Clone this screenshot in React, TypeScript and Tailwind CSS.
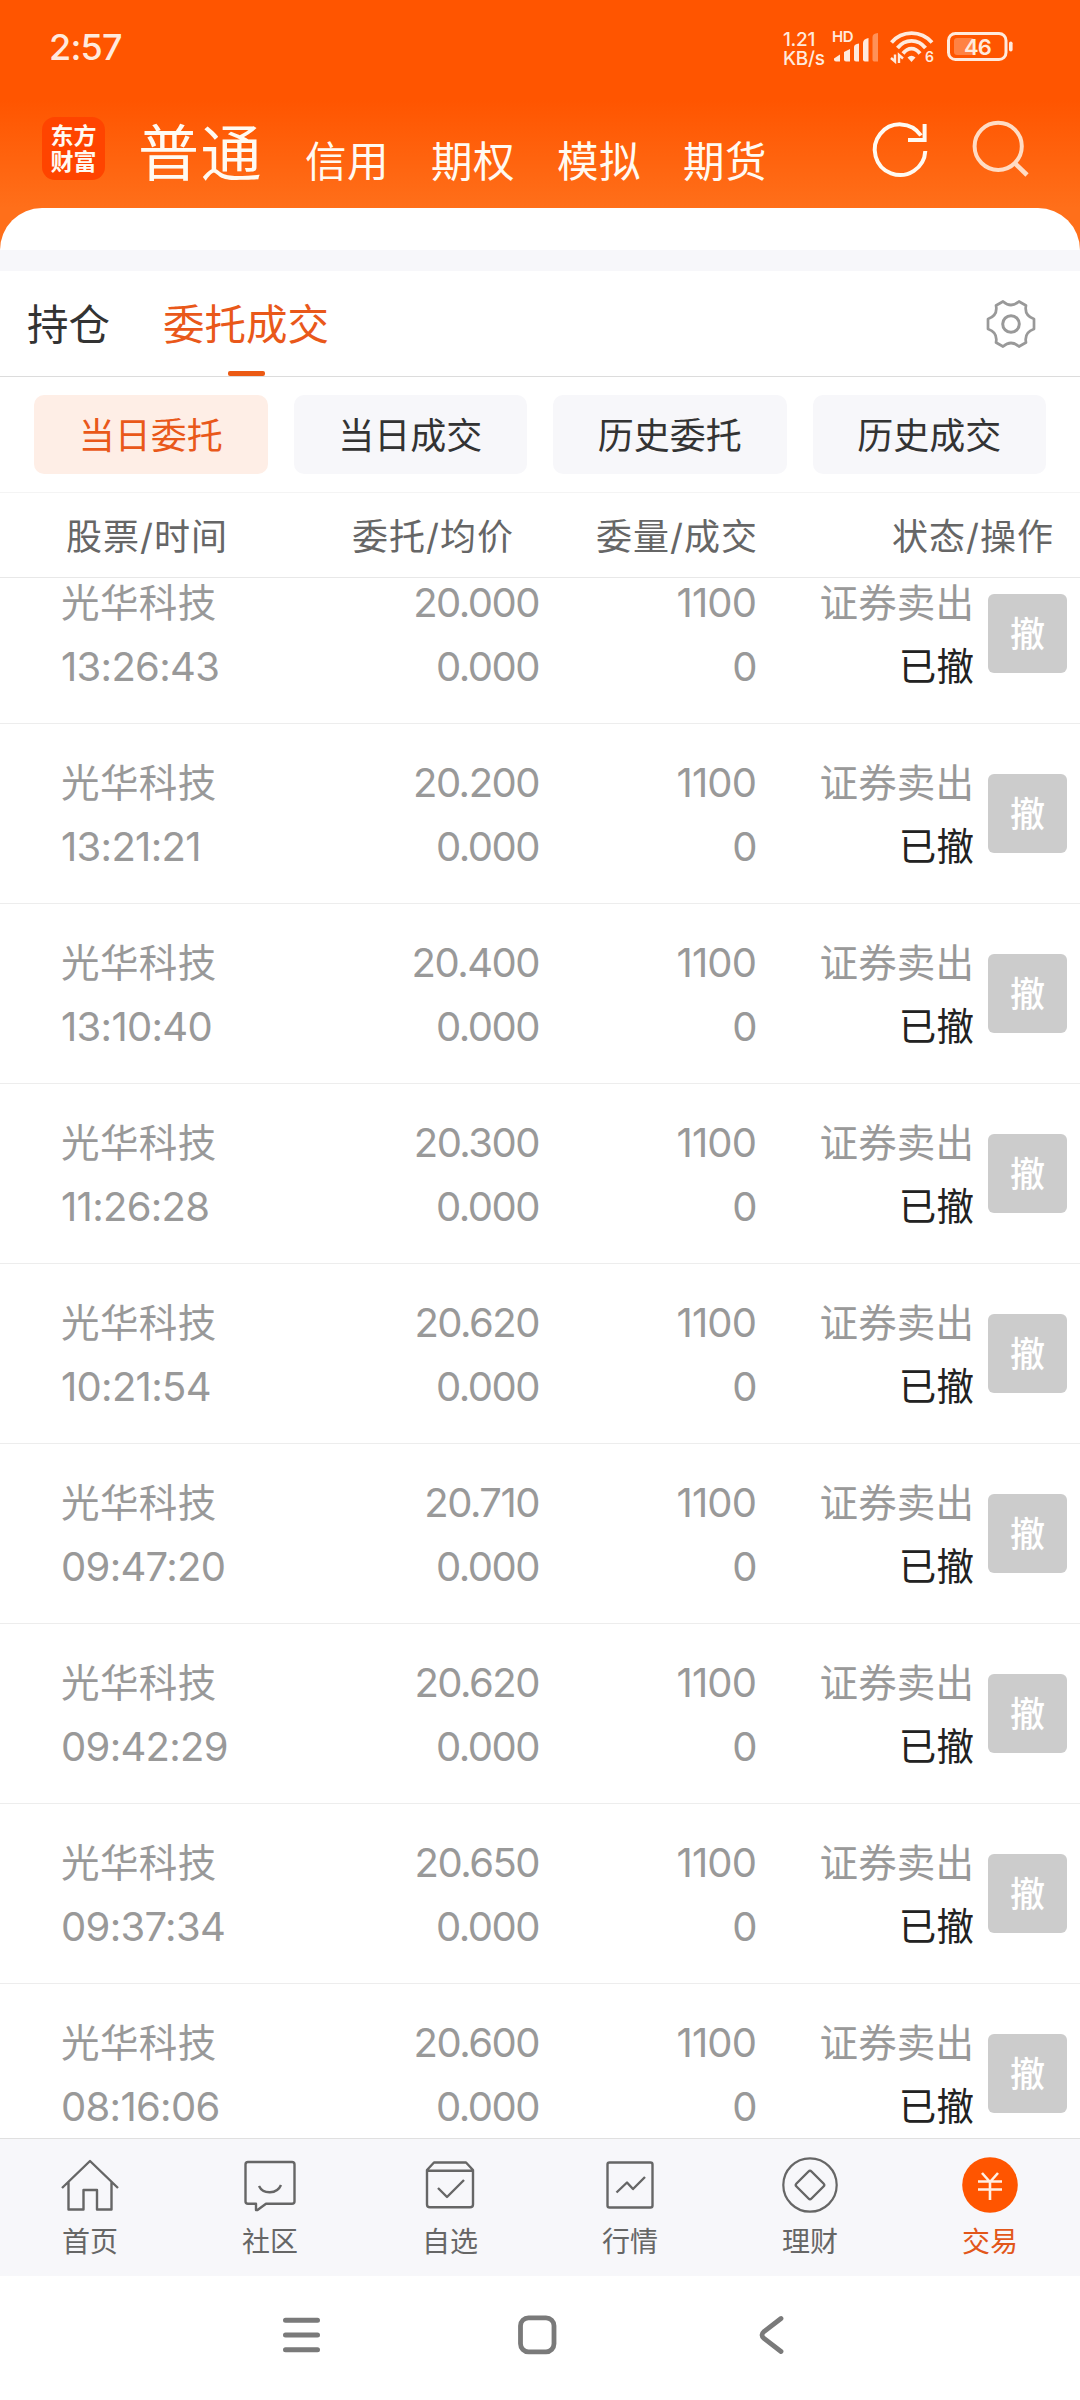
import { clsx } from "clsx";
import type { ReactNode } from "react";

const markets = ["信用", "期权", "模拟", "期货"];
const filters = ["当日委托", "当日成交", "历史委托", "历史成交"];

const orders = [
  { time: "13:26:43", price: "20.000" },
  { time: "13:21:21", price: "20.200" },
  { time: "13:10:40", price: "20.400" },
  { time: "11:26:28", price: "20.300" },
  { time: "10:21:54", price: "20.620" },
  { time: "09:47:20", price: "20.710" },
  { time: "09:42:29", price: "20.620" },
  { time: "09:37:34", price: "20.650" },
  { time: "08:16:06", price: "20.600" },
];

function StatusBar() {
  return (
    <div className="flex h-[97px] items-start justify-between pl-[49px] pr-[67px] text-[#ffeadd]">
      <span className="mt-[26px] text-[36px] leading-[42px] font-medium tracking-[-0.8px]">2:57</span>
      <div className="mt-[30px] flex items-start">
        <div className="w-[49px] text-[19px] leading-[19px] font-medium tracking-[-0.3px]">
          <div>1.21</div>
          <div>KB/s</div>
        </div>
        <div className="relative h-[34px] w-[46px]">
          <span className="absolute top-[-1px] left-0 text-[15px] leading-[16px] font-semibold tracking-[-0.4px]">HD</span>
          <svg className="absolute top-0 left-0" width="48" height="34" fill="currentColor">
            <path d="M2 28.500 8 24.500V31.500H4Q2 31.500 2 29.500Z" />
            <path d="M12 22 18 19V31.500H14Q12 31.500 12 29.500Z" />
            <path d="M22 17Q22 14 27 13.500V31.500H24Q22 31.500 22 29.500Z" />
            <path d="M31 13Q31 9 36.500 8V31.500H33Q31 31.500 31 29.500Z" />
            <path d="M40.500 7Q40.500 3.500 46 3V31.500H42Q40.500 31.500 40.500 29.500Z" opacity=".4" />
          </svg>
        </div>
        <div className="relative ml-[12px] h-[34px] w-[44px]">
          <svg width="44" height="34" fill="none" stroke="currentColor" strokeWidth="3.800">
            <path d="M1.500 12.500C12 0 31 0 42 12.500" />
            <path d="M7.500 18C15 8.500 28 8.500 35.500 18" />
            <path d="M13 23.500C18 17 25 17 30 23.500" />
            <path d="M17.500 27.500Q21.500 24 25.500 27.500L21.500 32Z" fill="currentColor" stroke="none" />
            <path d="M1 28 5 31.500V24.500M9 33V25L13 28.500" strokeWidth="2.400" />
          </svg>
          <span className="absolute top-[19px] left-[35px] text-[14px] leading-[16px] font-semibold">6</span>
        </div>
        <div className="relative ml-[13px] h-[34px] w-[66px]">
          <svg width="66" height="34" fill="none">
            <rect x="1.500" y="3.500" width="57.500" height="26" rx="7" stroke="currentColor" strokeWidth="3" />
            <rect x="7" y="8" width="20" height="17" rx="3" fill="currentColor" opacity=".3" />
            <rect x="62" y="11.500" width="3.600" height="10" rx="1.800" fill="currentColor" />
          </svg>
          <span className="absolute top-0 left-0 w-[61px] text-center text-[22px] leading-[34px] font-semibold tracking-[-0.8px]">46</span>
        </div>
      </div>
    </div>
  );
}

function TopNav() {
  return (
    <div className="flex h-[111px] items-start pr-[50px] pl-[42px] text-[#fffaf2]">
      <div className="mt-[20px] h-[63px] w-[63px] rounded-[13px] bg-[#ff4400] pt-[6px] text-center text-[23px] leading-[26px] font-bold">
        <div>东方</div>
        <div>财富</div>
      </div>
      <span className="ml-[33px] w-[125px] pt-[26px] text-[61px] leading-[62px] tracking-[1.5px]">普通</span>
      <div className="ml-[42px] flex gap-[42px] pt-[44px] text-[41.5px] leading-[42px] tracking-[0.5px]">
        {markets.map((m) => (
          <span key={m} className="w-[84px]">{m}</span>
        ))}
      </div>
      <svg className="mt-[23px] ml-auto" width="62" height="62" fill="none" stroke="currentColor" strokeWidth="4">
        <path d="M55.300 31A25.300 25.300 0 1 1 51 15.500" />
        <path d="M54.600 4V20H38" />
      </svg>
      <svg className="mt-[23px] ml-[38px]" width="60" height="62" fill="none" stroke="#ffdcc4" strokeWidth="4">
        <circle cx="28.200" cy="26.300" r="23.600" />
        <path d="M45 43.300 57 55" strokeWidth="4.600" />
      </svg>
    </div>
  );
}

function Gear() {
  return (
    <svg className="mt-[28px]" width="50" height="50" viewBox="-25 -25 50 50" fill="none" stroke="#999" strokeWidth="2.700">
      <path
        strokeLinejoin="round"
        d="M-8-22.500Q0-15.500 8-22.500L15-18.500Q13-8.500 23-5V5Q13 8.500 15 18.500L8 22.500Q0 15.500-8 22.500L-15 18.500Q-13 8.500-23 5V-5Q-13-8.500-15-18.500Z"
      />
      <circle r="8.300" strokeWidth="3" />
    </svg>
  );
}

function OrderRow({ time, price }: { time: string; price: string }) {
  return (
    <div className="grid h-[180px] shrink-0 grid-cols-[300px_239px_217px_218px_1fr] border-b border-[#ededed] pt-[27px] text-[40px] leading-[64px] tracking-[-1.5px] text-[#999]">
      <div className="pl-[61px]">
        <div className="text-[38.5px] tracking-[0.4px]">光华科技</div>
        <div className="tracking-[-0.7px]">{time}</div>
      </div>
      <div className="text-right">
        <div>{price}</div>
        <div>0.000</div>
      </div>
      <div className="text-right">
        <div className="tracking-[-0.9px]">1100</div>
        <div>0</div>
      </div>
      <div className="text-right text-[38.5px] tracking-[0.1px]">
        <div>证券卖出</div>
        <div className="text-[37.5px] text-[#222]">已撤</div>
      </div>
      <button className="mt-[23px] ml-[14px] h-[79px] w-[79px] rounded-[6px] bg-[#ccc] text-[35px] leading-[81px] font-medium tracking-normal text-white">
        撤
      </button>
    </div>
  );
}

function TabItem({ label, active, children }: { label: string; active?: boolean; children: ReactNode }) {
  return (
    <div className={clsx("flex flex-col items-center", active ? "text-[#e2571a]" : "text-[#666]")}>
      <svg
        className="mt-[16px]"
        width="60"
        height="60"
        viewBox="-30 -30 60 60"
        fill="none"
        stroke="currentColor"
        strokeWidth="2.400"
        strokeLinejoin="round"
      >
        {children}
      </svg>
      <span className="mt-[11px] text-[28px] leading-[32px]">{label}</span>
    </div>
  );
}

function TabBar() {
  return (
    <div className="grid h-[138px] grid-cols-6 border-t border-[#e0e0e0] bg-[#f7f7fa]">
      <TabItem label="首页">
        <path d="M-28 3 0-24 28 3M-21.500-3V24.500H-6.500V5H7V24.500H21.500V-3" />
      </TabItem>
      <TabItem label="社区">
        <path d="M-22-23H22Q24.500-23 24.500-20.500V16.500Q24.500 18.700 22 18.700H-4L-12.500 25H-14V18.700H-22Q-24.500 18.700-24.500 16.500V-20.500Q-24.500-23-22-23Z" />
        <path d="M-11 1C-7 9.500 7 9.500 11 0" />
      </TabItem>
      <TabItem label="自选">
        <path d="M-16-22.500H16L23-15V19.500Q23 22.300 20 22.300H-20Q-23 22.300-23 19.500V-15ZM-23-14.300H23" />
        <path d="M-12 3-3 12 14-5" />
      </TabItem>
      <TabItem label="行情">
        <rect x="-22.500" y="-22.500" width="45" height="45" rx="2" />
        <path d="M-13.500 7.500-3-2.500 3 4 15-8" />
      </TabItem>
      <TabItem label="理财">
        <circle r="26.700" strokeWidth="2.200" />
        <path d="M-1.500-13.500Q0-15 1.500-13.500L13.500-1.500Q15 0 13.500 1.500L1.500 13.500Q0 15-1.500 13.500L-13.500 1.500Q-15 0-13.500-1.500Z" />
      </TabItem>
      <TabItem label="交易" active>
        <circle r="27.800" fill="#ff5500" stroke="none" />
        <path d="M-8-12 0-3 8-12M-12-3.500H12M-12 4.500H12M0-3V15" stroke="#fff0e4" strokeWidth="2.600" />
      </TabItem>
    </div>
  );
}

function SystemNav() {
  return (
    <div className="flex h-[124px] items-start bg-white pt-[36px] pl-[280px]">
      <svg width="42" height="46" stroke="#7a7a7a" strokeWidth="5" strokeLinecap="round">
        <path d="M5.500 8.300H37.500M5.500 23H37.500M5.500 37.700H37.500" />
      </svg>
      <svg className="ml-[193px]" width="46" height="46" fill="none" stroke="#7a7a7a" strokeWidth="4.800">
        <rect x="5.500" y="5.800" width="33.500" height="34" rx="8" />
      </svg>
      <svg className="ml-[196px]" width="32" height="46" fill="none" stroke="#7a7a7a" strokeWidth="4.800" strokeLinecap="round">
        <path d="M24 6.500 7 19.500Q3 23 7 26.500L24 39.500" />
      </svg>
    </div>
  );
}

export default function App() {
  return (
    <div className="flex h-[2400px] w-[1080px] flex-col overflow-hidden bg-white font-[Inter,'Noto_Sans_CJK_SC',sans-serif] text-[#333]">
      <header className="h-[250px] bg-[linear-gradient(#ff5500_100px,#ff6f1a_208px)]">
        <StatusBar />
        <TopNav />
        <div className="h-[42px] rounded-t-[42px] bg-white" />
      </header>

      <div className="h-[21px] bg-[#f7f7fa]" />

      <div className="flex h-[106px] items-start justify-between border-b border-[#dcdcdc] pr-[44px] pl-[27px] text-[41.5px] leading-[108px]">
        <div className="flex gap-[53px]">
          <span>持仓</span>
          <span className="relative text-[#e9581a]">
            委托成交
            <span className="absolute top-[100px] left-[65px] h-[5px] w-[37px] rounded-[2px] bg-[#eb5a14]" />
          </span>
        </div>
        <Gear />
      </div>

      <div className="grid h-[116px] grid-cols-4 gap-[26px] border-b border-[#f4f4f4] px-[34px] pt-[18px]">
        {filters.map((f, i) => (
          <button
            key={f}
            className={clsx(
              "h-[79px] rounded-[10px] text-[36px] leading-[82px]",
              i === 0 ? "bg-[#feeee6] text-[#e9581a]" : "bg-[#f7f7fa]",
            )}
          >
            {f}
          </button>
        ))}
      </div>

      <div className="grid h-[85px] grid-cols-[300px_214px_244px_296px] border-b border-[#e8e8e8] text-[36px] leading-[88px] tracking-[1px] text-[#666]">
        <span className="pl-[66px]">股票/时间</span>
        <span className="text-right">委托/均价</span>
        <span className="text-right">委量/成交</span>
        <span className="text-right">状态/操作</span>
      </div>

      <main className="h-[1560px] overflow-hidden">
        <div className="-mt-[34px] flex flex-col">
          {orders.map((o) => (
            <OrderRow key={o.time} {...o} />
          ))}
        </div>
      </main>

      <TabBar />
      <SystemNav />
    </div>
  );
}
